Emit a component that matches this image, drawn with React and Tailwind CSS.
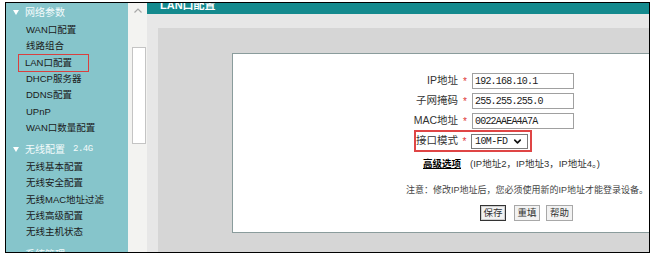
import { ChevronDown } from 'lucide-react';

// Router admin - LAN port settings page
const netItems = ['WAN口配置', '线路组合', 'LAN口配置', 'DHCP服务器', 'DDNS配置', 'UPnP', 'WAN口数量配置'];
const wifiItems = ['无线基本配置', '无线安全配置', '无线MAC地址过滤', '无线高级配置', '无线主机状态'];

function SectionHeader({ title, extra }) {
  return (
    <div className="flex h-[19px] items-center pl-[7px] text-[10px] text-[#f4fbfb]">
      <svg width="6" height="5" viewBox="0 0 6 5" className="mr-[6px]">
        <path d="M0 0 L6 0 L3 5 Z" fill="#ffffff" />
      </svg>
      <span>{title}</span>
      {extra && (
        <span className="ml-[8px] font-['Liberation_Mono',monospace] text-[9px] tracking-[-0.5px]">{extra}</span>
      )}
    </div>
  );
}

function MenuItem({ label, marked }) {
  if (marked) {
    return (
      <div className="flex h-[16.3px] items-center pl-[12px]">
        <div className="flex h-[18px] w-[71px] items-center border-[1.5px] border-[#d9403f] pl-[6px] text-[9.5px] text-[#1a1a1a]">
          {label}
        </div>
      </div>
    );
  }
  return (
    <div className="flex h-[16.3px] items-center pl-[20px] text-[9.5px] text-[#1a1a1a]">{label}</div>
  );
}

function Label({ children }) {
  return (
    <div className="flex w-[42px] justify-end whitespace-nowrap text-[10.5px] text-[#333]">{children}</div>
  );
}

function FieldRow({ label, value }) {
  return (
    <div className="flex h-[16px] items-center pl-[183px]">
      <Label>{label}</Label>
      <div className="w-[14px] text-center text-[10px] text-[#e03535]">*</div>
      <input
        readOnly
        value={value}
        className="h-[16px] w-[102px] border border-[#a0a0a0] bg-white px-[2px] font-['Liberation_Mono',monospace] text-[10px] tracking-[-0.8px] text-[#222] outline-none"
      />
    </div>
  );
}

export default function App() {
  return (
    <div className="h-[257px] w-[655px] overflow-hidden bg-white pl-[5px] pt-[2px] font-['Liberation_Sans','Noto_Sans_CJK_SC',sans-serif]">
      <div className="flex h-[251px] w-[645px] overflow-hidden border border-black">
        {/* sidebar */}
        <div className="w-[122px] overflow-hidden bg-[#86c5cb]">
          <SectionHeader title="网络参数" />
          {netItems.map((item) => (
            <MenuItem key={item} label={item} marked={item === 'LAN口配置'} />
          ))}
          <div className="mt-[4px]">
            <SectionHeader title="无线配置" extra="2.4G" />
          </div>
          {wifiItems.map((item) => (
            <MenuItem key={item} label={item} />
          ))}
          <div className="mt-[4px]">
            <SectionHeader title="系统管理" />
          </div>
        </div>

        {/* scrollbar */}
        <div className="flex w-[19px] flex-col bg-[#f3f3f1]">
          <svg width="8" height="5" viewBox="0 0 8 5" className="ml-[6px] mt-[5px]">
            <path d="M0.5 4.5 L4 1 L7.5 4.5" fill="none" stroke="#a8a8a8" strokeWidth="1.2" />
          </svg>
          <div className="ml-[4px] mt-[34px] h-[97px] w-[14px] border border-[#c4c4c4] bg-white" />
        </div>

        {/* main */}
        <div className="flex flex-1 flex-col bg-[#e7e7e7]">
          <div className="h-[11px] overflow-hidden bg-[#148a8e] pl-[13px]">
            <div className="-mt-[3px] text-[11px] font-bold leading-[11px] text-white">LAN口配置</div>
          </div>
          <div className="flex flex-1 flex-col pl-[11px] pt-[14px]">
            <div className="flex flex-1 flex-col bg-[#d6d6d6] pb-[19px] pl-[74px] pt-[25px]">
              <div className="flex-1 border border-r-0 border-[#8a9c9c] bg-white pt-[19px]">
                <FieldRow label="IP地址" value="192.168.10.1" />
                <div className="mt-[4px]">
                  <FieldRow label="子网掩码" value="255.255.255.0" />
                </div>
                <div className="mt-[4px]">
                  <FieldRow label="MAC地址" value="0022AAEA4A7A" />
                </div>

                <div className="ml-[181px] mt-[1px] flex h-[22px] w-[118px] items-center border-2 border-[#df4545]">
                  <Label>接口模式</Label>
                  <div className="w-[13px] text-center text-[10px] text-[#e03535]">*</div>
                  <div className="flex h-[15px] w-[57px] items-center justify-between border border-[#7a7a7a] bg-white pl-[3px] pr-[4px]">
                    <span className="font-['Liberation_Mono',monospace] text-[10px] tracking-[-0.6px] text-[#222]">10M-FD</span>
                    <ChevronDown size={11} strokeWidth={3.5} color="#111" />
                  </div>
                </div>

                <div className="mt-[5px] flex h-[14px] items-center pl-[190px] text-[9.5px]">
                  <span className="font-bold text-black underline">高级选项</span>
                  <span className="ml-[9px] text-[#333]">(IP地址2，IP地址3，IP地址4。)</span>
                </div>

                <div className="mt-[14px] flex h-[12px] items-center pl-[173px] text-[9px] text-[#444]">
                  注意：修改IP地址后，您必须使用新的IP地址才能登录设备。
                </div>

                <div className="mt-[8px] flex h-[16px] items-center pl-[247px] text-[9.5px] text-[#333]">
                  <button className="h-[16px] w-[26px] border border-[#333] bg-[#f2f2f2] shadow-[inset_0_0_0_1px_#cfcfcf]">保存</button>
                  <button className="ml-[8px] h-[16px] w-[26px] border border-[#a8a8a8] bg-[#f2f2f2]">重填</button>
                  <button className="ml-[6px] h-[16px] w-[27px] border border-[#a8a8a8] bg-[#f2f2f2]">帮助</button>
                </div>
              </div>
            </div>
          </div>
        </div>
      </div>
    </div>
  );
}
